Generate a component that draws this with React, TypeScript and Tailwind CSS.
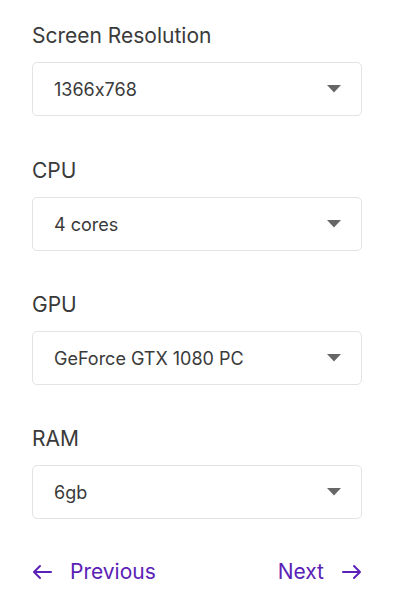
import React from 'react';

const fields = [
  { label: 'Screen Resolution', value: '1366x768' },
  { label: 'CPU', value: '4 cores' },
  { label: 'GPU', value: 'GeForce GTX 1080 PC' },
  { label: 'RAM', value: '6gb' },
];

function Caret() {
  return (
    <svg width="14" height="8" viewBox="0 0 14 8" className="shrink-0">
      <path d="M0 0h14L7 7.5z" fill="#666" />
    </svg>
  );
}

export default function App() {
  return (
    <div className="bg-white min-h-[599px] font-['Inter',sans-serif] [font-feature-settings:'calt'_0] pl-8 pt-6">
      <div className="w-[330px]">
        {fields.map((f, i) => (
          <div key={f.label} className={i === 0 ? 'mb-[43px]' : 'mb-[42px]'}>
            <div className="text-[21px] leading-6 text-[#3a3a3a] mb-[14px]">{f.label}</div>
            <div className="h-[54px] border border-[#e3e3e3] rounded-[5px] flex items-center justify-between pl-[21px] pr-[20px]">
              <span className="text-[18px] text-[#3a3a3a]">{f.value}</span>
              <Caret />
            </div>
          </div>
        ))}
        <div className="flex items-center justify-between -mt-[1px] text-[21px] leading-6 text-[#5b21b6]">
          <button className="flex items-center gap-[18px]">
            <svg width="20" height="16" viewBox="0 0 20 16" fill="none" stroke="currentColor" strokeWidth="2" strokeLinecap="round" strokeLinejoin="round">
              <path d="M19 8H2M8 2L2 8l6 6" />
            </svg>
            <span>Previous</span>
          </button>
          <button className="flex items-center gap-[18px]">
            <span>Next</span>
            <svg width="20" height="16" viewBox="0 0 20 16" fill="none" stroke="currentColor" strokeWidth="2" strokeLinecap="round" strokeLinejoin="round">
              <path d="M1 8h17M12 2l6 6-6 6" />
            </svg>
          </button>
        </div>
      </div>
    </div>
  );
}
